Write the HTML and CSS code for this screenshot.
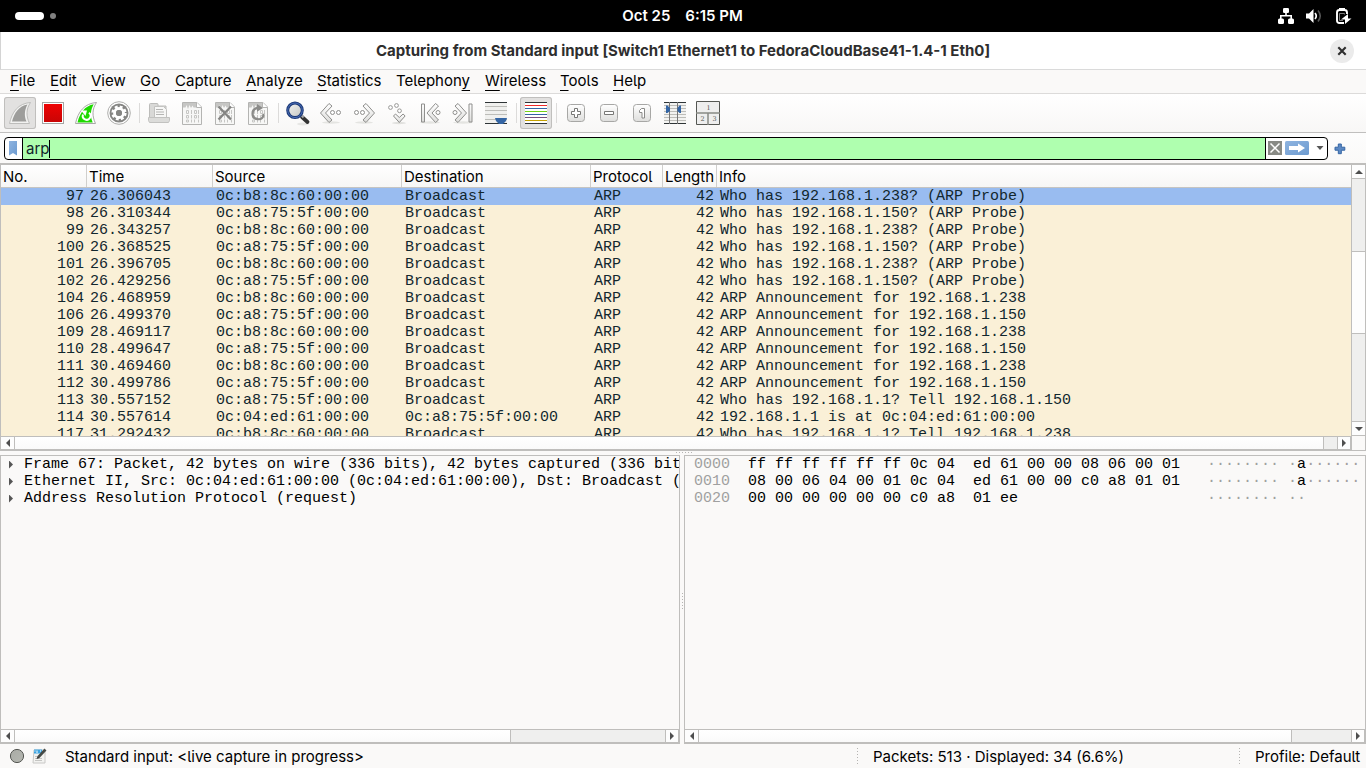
FILE: index.html
```html
<!DOCTYPE html>
<html lang="en">
<head>
<meta charset="utf-8">
<title>Capturing from Standard input</title>
<link rel="stylesheet" href="styles.css">
</head>
<body>
<svg class="defs" width="0" height="0">
  <defs>
    <linearGradient id="gBlue" x1="0" y1="0" x2="1" y2="1"><stop offset="0" stop-color="#8fb4e0"/><stop offset="1" stop-color="#6d9bd0"/></linearGradient>
    <linearGradient id="gLens" x1="0" y1="0" x2="1" y2="1"><stop offset="0" stop-color="#f4f4f2"/><stop offset="1" stop-color="#c3c5c1"/></linearGradient>
    <linearGradient id="gRed" x1="0" y1="0" x2="0" y2="1"><stop offset="0" stop-color="#ee0303"/><stop offset="1" stop-color="#c90505"/></linearGradient>
    <linearGradient id="gBtn" x1="0" y1="0" x2="0" y2="1"><stop offset="0" stop-color="#fff"/><stop offset="1" stop-color="#dededc"/></linearGradient>
    <linearGradient id="gNav" x1="0" y1="0" x2="0" y2="1"><stop offset="0" stop-color="#fff"/><stop offset="1" stop-color="#dcdcda"/></linearGradient>
    <linearGradient id="gBall" x1="0" y1="0" x2="1" y2="1"><stop offset="0" stop-color="#a9aba5"/><stop offset="1" stop-color="#b6b8b2"/></linearGradient>
    <g id="page">
      <path d="M6.500 5.500h14.500l4.500 4.500v17.500h-19z" fill="#f7f7f6" stroke="#b4b4b2"/>
      <path d="M7 6h13v4.500h-2.500l-1-2-1.500 2.500-1.500-3-1.500 4-1.500-4-1 2.500H7z" fill="#c6c6c4"/>
      <path d="M20.500 5.500v5h5" fill="#fff" stroke="#b4b4b2"/>
      <g fill="none" stroke="#c6c6c4">
        <path d="M10.500 13.500h2v3h-2zM18.500 13.500h2v3h-2z M15.500 13v4M22.500 13v4"/>
        <path d="M10.500 18.500h2v2.500h-2zM18.500 18.500h2v2.500h-2z M15.500 18v3.500M22.500 18v3.500"/>
        <path d="M10.500 23h2v2h-2z M15.500 22.500v3M18.500 22.500v3M22.500 22.500v3"/>
      </g>
    </g>
  </defs>
</svg>

<header class="topbar">
  <div class="spaces"><span class="pill"></span><span class="dot"></span></div>
  <div class="clock"><span>Oct 25</span><span>6:15 PM</span></div>
  <svg class="tray" width="76" height="20" viewBox="0 0 76 20">
    <g fill="#fff">
      <rect x="5" y="2" width="6" height="5" rx="1.300"/><rect x="0" y="12.500" width="6" height="5.500" rx="1.500"/><rect x="10" y="12.500" width="6" height="5.500" rx="1.500"/>
      <path d="M7.200 6h1.600v3H14v4h-1.600v-2.500H3.600V13H2V9h5.200z"/>
      <path d="M28 7.500h3L35.500 3v14L31 12.500h-3z"/>
    </g>
    <path d="M37 7q2.500 3 0 6" fill="none" stroke="#fff" stroke-width="1.700"/>
    <path d="M40 4.500q4.500 5.500 0 11" fill="none" stroke="#555" stroke-width="1.600"/>
    <path d="M66 17h-4.500q-2.500 0-2.500-2.500V6.500Q59 4 61.500 4h5Q69 4 69 6.500v1.500" fill="none" stroke="#fff" stroke-width="1.900"/>
    <rect x="61" y="2" width="6" height="2.500" fill="#fff"/><path d="M65 14.500h-3.500v-7h5v1" fill="none" stroke="#999" stroke-width=".8"/><path d="M70 8v4.500h3.500L67 18v-4.500h-4z" fill="#fff"/>
  </svg>
</header>

<div class="titlebar">
  <h1>Capturing from Standard input [Switch1 Ethernet1 to FedoraCloudBase41-1.4-1 Eth0]</h1>
  <svg class="close" width="24" height="24" viewBox="0 0 24 24"><circle cx="12" cy="12" r="12" fill="#ebebeb"/><path d="M8.300 8.300l7.400 7.400M15.700 8.300l-7.400 7.400" stroke="#2e2e2e" stroke-width="2.100"/></svg>
</div>

<nav class="menubar">
  <span class="m-file"><u>F</u>ile</span><span class="m-edit"><u>E</u>dit</span><span class="m-view"><u>V</u>iew</span><span class="m-go"><u>G</u>o</span><span class="m-capture"><u>C</u>apture</span><span class="m-analyze"><u>A</u>nalyze</span><span class="m-stat"><u>S</u>tatistics</span><span class="m-tel">Telephon<u>y</u></span><span class="m-wire"><u>W</u>ireless</span><span class="m-tools"><u>T</u>ools</span><span class="m-help"><u>H</u>elp</span>
</nav>

<div class="toolbar">
  <svg class="tool pressed" viewBox="0 0 32 32"><path d="M5.500 26.500C8 15 14 6.500 26.500 5.500C22 12 22 19 25.500 26.500z" fill="#f2f2f1" stroke="#bdbdbb"/><path d="M8 24.500C10.500 15.500 15 9 23.500 7.500C20.500 13 20 19 22.500 24.500z" fill="#9d9d9b"/></svg>
  <svg class="tool" viewBox="0 0 32 32"><rect x="5.500" y="5.500" width="21" height="21" fill="#fff" stroke="#a5a5a3"/><rect x="7" y="7" width="18" height="18" fill="url(#gRed)"/></svg>
  <svg class="tool" viewBox="0 0 32 32"><path d="M5.500 26.500C8 15 14 6.500 26.500 5.500C22 12 22 19 25.500 26.500z" fill="#fff" stroke="#a9a9a7"/><path d="M7.500 25.500C10 15.500 15 9 23.700 7.300C20.500 13 20 19 22.700 25.500z" fill="#1ed800"/><path d="M13 17.500a3.900 3.900 0 1 0 6-1.800" fill="none" stroke="#fff" stroke-width="2"/><path d="M11 13.500h6l-1.500 5.500z" fill="#fff"/></svg>
  <svg class="tool" viewBox="0 0 32 32"><circle cx="16" cy="16" r="11.300" fill="#fff" stroke="#aeaeac"/><circle cx="16" cy="16" r="9.500" fill="#858583"/><circle cx="16" cy="16" r="6.300" fill="none" stroke="#fff" stroke-width="2.600" stroke-dasharray="2.800 2.150"/><circle cx="16" cy="16" r="4.400" fill="none" stroke="#fff" stroke-width="3"/><circle cx="16" cy="16" r="3" fill="#858583"/></svg>
  <i class="sep"></i>
  <svg class="tool" viewBox="0 0 32 32"><path d="M6.500 22V7.500q0-1 1-1H14q1 0 1 1V9h8v13z" fill="#d9d9d7" stroke="#bcbcba"/><path d="M11.500 21V9.500h9l3 3V21z" fill="#f7f7f6" stroke="#c2c2c0"/><path d="M13 12.500h7M13 15h8M13 17.500h8" stroke="#b5b5b3"/><path d="M5.500 20.500h21v3l-1 2h-19l-1-2z" fill="#dcdcda" stroke="#c2c2c0"/></svg>
  <svg class="tool" viewBox="0 0 32 32"><use href="#page"/></svg>
  <svg class="tool" viewBox="0 0 32 32"><use href="#page"/><path d="M9.500 9.500L22 22.500M22 9.500L9.500 22.500" stroke="#848482" stroke-width="2.300"/></svg>
  <svg class="tool" viewBox="0 0 32 32"><use href="#page"/><path d="M15.500 10.800q-5 1-5 6t5.500 5.400t5.500-5.500" fill="none" stroke="#8b8b89" stroke-width="2.200"/><path d="M15 7l6 4-6 3.800z" fill="#8b8b89"/></svg>
  <i class="sep"></i>
  <svg class="tool" viewBox="0 0 32 32"><ellipse cx="21" cy="27" rx="6" ry="1.500" fill="#e6e6e4"/><path d="M20 20l5.500 5" stroke="#333" stroke-width="3.800" stroke-linecap="round"/><path d="M19.500 18.500l2 2" stroke="#aaa" stroke-width="2"/><circle cx="13" cy="13.300" r="7.300" fill="url(#gLens)" stroke="#1d3a78" stroke-width="3"/><circle cx="13" cy="13.300" r="7.300" fill="none" stroke="#486cb5"/></svg>
  <svg class="tool" viewBox="0 0 32 32"><ellipse cx="16" cy="25.500" rx="9" ry="1.200" fill="#e4e4e1"/><path d="M14 6.500l3 2.500-6.500 7 6.500 7-3 2.500L5.500 16z" fill="url(#gNav)" stroke="#8f8f8d"/><circle cx="17.500" cy="15.500" r="2" fill="#fff" stroke="#8f8f8d"/><circle cx="23.500" cy="15.500" r="2" fill="#fff" stroke="#8f8f8d"/></svg>
  <svg class="tool" viewBox="0 0 32 32"><ellipse cx="16" cy="25.500" rx="9" ry="1.200" fill="#e4e4e1"/><path d="M18 6.500l-3 2.500 6.500 7-6.500 7 3 2.500 8.500-9.500z" fill="url(#gNav)" stroke="#8f8f8d"/><circle cx="14.500" cy="15.500" r="2" fill="#fff" stroke="#8f8f8d"/><circle cx="8.500" cy="15.500" r="2" fill="#fff" stroke="#8f8f8d"/></svg>
  <svg class="tool" viewBox="0 0 32 32"><ellipse cx="18" cy="26" rx="7" ry="1.200" fill="#e0e0dd"/><path d="M12.500 19l2-2 3.800 3.500 3.800-3.500 2 2-5.800 6.500z" fill="url(#gNav)" stroke="#8c8c8a"/><g fill="#fff" stroke="#999997"><circle cx="9.500" cy="10.500" r="1.900"/><circle cx="15.500" cy="8.500" r="1.900"/><circle cx="18.500" cy="13.800" r="1.900"/></g></svg>
  <svg class="tool" viewBox="0 0 32 32"><ellipse cx="16" cy="25.500" rx="10" ry="1.200" fill="#e4e4e1"/><path d="M7.500 7h3v18h-3zM21.500 6.500l3 2.500-6.500 7 6.500 7-3 2.500L13 16z" fill="url(#gNav)" stroke="#8f8f8d"/><circle cx="24" cy="15.500" r="2" fill="#fff" stroke="#8f8f8d"/></svg>
  <svg class="tool" viewBox="0 0 32 32"><ellipse cx="16" cy="25.500" rx="10" ry="1.200" fill="#e4e4e1"/><path d="M22 7h3v18h-3zM11 6.500l-3 2.500 6.500 7-6.500 7 3 2.500 8.500-9.500z" fill="url(#gNav)" stroke="#8f8f8d"/><circle cx="8" cy="15.500" r="2" fill="#fff" stroke="#8f8f8d"/></svg>
  <svg class="tool" viewBox="0 0 32 32"><path d="M5 5h22v22H5z" fill="#f0f0ee"/><path d="M5 9.500h22M5 13.500h22M5 17.500h22M5 22.500h22" stroke="#bdbdb9"/><path d="M5 5.500h22M5 26.500h22" stroke="#2e3436"/><path d="M15 21h12l-1 3-3 3h-4l-3-3z" fill="#3465a4"/></svg>
  <i class="sep"></i>
  <svg class="tool pressed" viewBox="0 0 32 32"><path d="M5 5h22v22H5z" fill="#fff"/><path d="M5 5.500h22M5 26.500h22" stroke="#2e3436"/><path d="M5 8.500h22" stroke="#ef2929"/><path d="M5 11.500h22M5 17.500h22" stroke="#3465a4"/><path d="M5 14.500h22" stroke="#73d216"/><path d="M5 20.500h22" stroke="#75507b"/><path d="M5 23.500h22" stroke="#c4a000"/></svg>
  <i class="sep"></i>
  <svg class="tool" viewBox="0 0 32 32"><rect x="7.500" y="7.500" width="17" height="17" rx="3" fill="url(#gBtn)" stroke="#a7a7a5"/><path d="M14.500 11.500h3v3h3v3h-3v3h-3v-3h-3v-3h3z" fill="#fff" stroke="#777775"/></svg>
  <svg class="tool" viewBox="0 0 32 32"><rect x="7.500" y="7.500" width="17" height="17" rx="3" fill="url(#gBtn)" stroke="#a7a7a5"/><path d="M11.500 14.500h9v3h-9z" fill="#fff" stroke="#777775"/></svg>
  <svg class="tool" viewBox="0 0 32 32"><rect x="7.500" y="7.500" width="17" height="17" rx="3" fill="url(#gBtn)" stroke="#a7a7a5"/><path d="M15.500 11.500h3v9.500h-2.500v-5.500h-2.500v-2z" fill="#fff" stroke="#8a8a88"/></svg>
  <svg class="tool" viewBox="0 0 32 32"><path d="M5 5h22v22H5z" fill="#f3f3f1"/><path d="M5 8.500h22M5 11.500h22M5 14.500h22M5 17.500h22M5 20.500h22M5 23.500h22" stroke="#bdbdb9"/><path d="M5 5.500h22M5 26.500h22" stroke="#2e3436"/><path d="M10.500 5v22M18.500 5v22" stroke="#777"/><path d="M7 8.500h1.500L11 11v3l-2.500 2H7zM22 8.500h-1.500L18.500 11v3l2 2H22z" fill="#3465a4"/></svg>
  <svg class="tool" viewBox="0 0 32 32"><path d="M4.500 4.500h23v23h-23z" fill="#eee" stroke="#555753"/><path d="M4 16h24M16 16v12" stroke="#888a85" stroke-width="1.500"/><g font-family="DejaVu Serif, serif" font-size="6.500" fill="#555753" text-anchor="middle"><text x="16.500" y="13">1</text><text x="10.500" y="24.300">2</text><text x="22.500" y="24.300">3</text></g></svg>
</div>

<div class="filterbar">
  <div class="filter">
    <svg class="bookmark" width="17" height="20" viewBox="0 0 17 20"><path d="M4 3h8v14.500l-4-2.500-4 2.500z" fill="url(#gBlue)"/></svg>
    <div class="query">arp<i class="caret"></i></div>
    <svg width="61" height="20" viewBox="0 0 61 20"><path d="M2 3h14v14H2z" fill="#888a85"/><path d="M4.500 5.500l9 9M13.500 5.500l-9 9" stroke="#fff" stroke-width="1.500"/><rect x="19" y="3" width="24" height="14" rx="1.500" fill="url(#gBlue)"/><path d="M23 8h9V5.500l7 4.500-7 4.500V12h-9z" fill="#fff"/><path d="M50.500 8h7L54 12z" fill="#555"/></svg>
  </div>
  <svg class="add" width="12" height="12" viewBox="0 0 12 12"><path d="M4.300 1h3v3.200h3.500v3H7.300v3.500h-3V7.200H1v-3h3.300z" fill="#5d8ac4" stroke="#3465a4"/></svg>
</div>

<section class="packets">
  <div class="list">
    <div class="row head"><span>No.</span><span>Time</span><span>Source</span><span>Destination</span><span>Protocol</span><span>Length</span><span>Info</span></div>
    <div class="rows">
      <div class="row selected"><span>97</span><span>26.306043</span><span>0c:b8:8c:60:00:00</span><span>Broadcast</span><span>ARP</span><span>42</span><span>Who has 192.168.1.238? (ARP Probe)</span></div>
      <div class="row"><span>98</span><span>26.310344</span><span>0c:a8:75:5f:00:00</span><span>Broadcast</span><span>ARP</span><span>42</span><span>Who has 192.168.1.150? (ARP Probe)</span></div>
      <div class="row"><span>99</span><span>26.343257</span><span>0c:b8:8c:60:00:00</span><span>Broadcast</span><span>ARP</span><span>42</span><span>Who has 192.168.1.238? (ARP Probe)</span></div>
      <div class="row"><span>100</span><span>26.368525</span><span>0c:a8:75:5f:00:00</span><span>Broadcast</span><span>ARP</span><span>42</span><span>Who has 192.168.1.150? (ARP Probe)</span></div>
      <div class="row"><span>101</span><span>26.396705</span><span>0c:b8:8c:60:00:00</span><span>Broadcast</span><span>ARP</span><span>42</span><span>Who has 192.168.1.238? (ARP Probe)</span></div>
      <div class="row"><span>102</span><span>26.429256</span><span>0c:a8:75:5f:00:00</span><span>Broadcast</span><span>ARP</span><span>42</span><span>Who has 192.168.1.150? (ARP Probe)</span></div>
      <div class="row"><span>104</span><span>26.468959</span><span>0c:b8:8c:60:00:00</span><span>Broadcast</span><span>ARP</span><span>42</span><span>ARP Announcement for 192.168.1.238</span></div>
      <div class="row"><span>106</span><span>26.499370</span><span>0c:a8:75:5f:00:00</span><span>Broadcast</span><span>ARP</span><span>42</span><span>ARP Announcement for 192.168.1.150</span></div>
      <div class="row"><span>109</span><span>28.469117</span><span>0c:b8:8c:60:00:00</span><span>Broadcast</span><span>ARP</span><span>42</span><span>ARP Announcement for 192.168.1.238</span></div>
      <div class="row"><span>110</span><span>28.499647</span><span>0c:a8:75:5f:00:00</span><span>Broadcast</span><span>ARP</span><span>42</span><span>ARP Announcement for 192.168.1.150</span></div>
      <div class="row"><span>111</span><span>30.469460</span><span>0c:b8:8c:60:00:00</span><span>Broadcast</span><span>ARP</span><span>42</span><span>ARP Announcement for 192.168.1.238</span></div>
      <div class="row"><span>112</span><span>30.499786</span><span>0c:a8:75:5f:00:00</span><span>Broadcast</span><span>ARP</span><span>42</span><span>ARP Announcement for 192.168.1.150</span></div>
      <div class="row"><span>113</span><span>30.557152</span><span>0c:a8:75:5f:00:00</span><span>Broadcast</span><span>ARP</span><span>42</span><span>Who has 192.168.1.1? Tell 192.168.1.150</span></div>
      <div class="row"><span>114</span><span>30.557614</span><span>0c:04:ed:61:00:00</span><span>0c:a8:75:5f:00:00</span><span>ARP</span><span>42</span><span>192.168.1.1 is at 0c:04:ed:61:00:00</span></div>
      <div class="row"><span>117</span><span>31.292432</span><span>0c:b8:8c:60:00:00</span><span>Broadcast</span><span>ARP</span><span>42</span><span>Who has 192.168.1.1? Tell 192.168.1.238</span></div>
    </div>
    <div class="hscroll"><b class="arrow left"></b><i class="thumb"></i><b class="rest r-list"></b><b class="arrow right"></b></div>
  </div>
  <div class="vscroll"><b class="arrow up"></b><i class="before"></i><i class="vthumb"></i><i class="after"></i><b class="arrow down"></b><i class="corner"></i></div>
</section>

<div class="hsplit"><i></i></div>

<main class="details">
  <section class="pane tree">
    <div class="body">
      <p>Frame 67: Packet, 42 bytes on wire (336 bits), 42 bytes captured (336 bit</p>
      <p>Ethernet II, Src: 0c:04:ed:61:00:00 (0c:04:ed:61:00:00), Dst: Broadcast (</p>
      <p>Address Resolution Protocol (request)</p>
    </div>
    <div class="hscroll"><b class="arrow left"></b><i class="thumb"></i><b class="rest r-tree"></b><b class="arrow right"></b></div>
  </section>
  <div class="vsplit"><i></i></div>
  <section class="pane bytes">
    <pre class="body"><s>0000</s>  ff ff ff ff ff ff 0c 04  ed 61 00 00 08 06 00 01   <s>········ ·</s>a<s>······</s>
<s>0010</s>  08 00 06 04 00 01 0c 04  ed 61 00 00 c0 a8 01 01   <s>········ ·</s>a<s>······</s>
<s>0020</s>  00 00 00 00 00 00 c0 a8  01 ee                     <s>········ ··</s></pre>
    <div class="hscroll"><b class="arrow left"></b><i class="thumb"></i><b class="rest r-bytes"></b><b class="arrow right"></b></div>
  </section>
</main>

<footer class="status">
  <svg width="48" height="24" viewBox="0 0 48 24"><circle cx="17" cy="12" r="6.600" fill="url(#gBall)" stroke="#555753"/><path d="M34 6h11v13H33z" fill="#f3f3f1" stroke="#c8c8c6"/><path d="M34 5.500h8v4h-8z" fill="#3ba3e0"/><path d="M34.500 7h1M37 9V6.500M40 7h1" stroke="#fff"/><path d="M35 12.500h4M35 14.500h7M35 16.500h7" stroke="#c5c5c3"/><path d="M38.500 13L45.500 5.500" stroke="#464a46" stroke-width="2.600"/><path d="M36.500 15l1.200-3 2 2z" fill="#333"/></svg>
  <span class="s-file">Standard input: &lt;live capture in progress&gt;</span>
  <span class="s-count">Packets: 513 · Displayed: 34 (6.6%)</span>
  <span class="s-profile">Profile: Default</span>
</footer>
</body>
</html>
```
FILE: styles.css
```css
* { box-sizing: border-box; }
body {
  margin: 0; width: 1366px; height: 768px; overflow: hidden;
  display: flex; flex-direction: column;
  background: #faf9f8; color: #000;
  font: 15px/18px Inter, "Noto Sans", sans-serif;
  font-feature-settings: "cv05";
}
body > * { flex: none; }
svg { display: block; flex: none; }
.defs { position: absolute; }

.topbar { height: 32px; background: #000; color: #fff; display: grid; grid-template-columns: 1fr auto 1fr; align-items: center; }
.spaces { display: flex; align-items: center; gap: 6px; padding-left: 15px; }
.pill { width: 29px; height: 8px; border-radius: 4px; background: #fff; }
.dot { width: 6px; height: 6px; border-radius: 3px; background: #808080; }
.clock { display: flex; gap: 15px; padding-right: 1px; font-weight: 600; font-size: 15px; }
.tray { justify-self: end; margin-right: 12px; }

.titlebar { height: 38px; background: #fff; border-bottom: 1px solid #dadada; border-left: 1px solid #d4d4d4; display: flex; align-items: center; padding-right: 12px; }
.titlebar h1 { margin: 0 0 0 35px; flex: 1; text-align: center; font-size: 15px; font-weight: 700; color: #2e2e2e; white-space: nowrap; }

.menubar { height: 24px; border-bottom: 1px solid #dcdbda; display: flex; padding: 2px 0 0 10px; }
.menubar span { white-space: nowrap; }
.menubar u { text-decoration: underline; text-decoration-thickness: 1px; text-underline-offset: 4px; text-decoration-skip-ink: none; }
.m-file { width: 40px; } .m-edit { width: 41px; } .m-view { width: 49px; } .m-go { width: 35px; }
.m-capture { width: 71px; } .m-analyze { width: 71px; } .m-stat { width: 79px; } .m-tel { width: 89px; }
.m-wire { width: 75px; } .m-tools { width: 53px; }

.toolbar { height: 39px; display: flex; gap: 1px; padding: 3px 0 0 4px; border-bottom: 1px solid #c0bfbe; background: linear-gradient(#fff, #f8f7f6); }
.tool { width: 32px; height: 32px; }
.pressed { background: #e2e1e0; box-shadow: inset 0 0 0 1px #c0bfbd; border-radius: 3px; }
.sep { width: 6px; height: 20px; margin-top: 6px; background: linear-gradient(#dcdbda, #dcdbda) 3px 0 / 1px 100% no-repeat; }

.filterbar { height: 30px; display: flex; align-items: center; padding: 1px 0 0 4px; background: linear-gradient(#fdfdfd, #faf9f8); }
.filter { width: 1324px; height: 23px; border: 1px solid #000; border-radius: 4px; background: #fff; display: flex; align-items: stretch; }
.query { flex: 1; background: #afffaf; border: solid #000; border-width: 0 1px; padding: 2px 3px; line-height: 18px; color: #12232a; display: flex; }
.caret { width: 1px; height: 18px; margin-left: -1px; background: #000; }
.add { margin-left: 6px; }

.packets { height: 288px; display: flex; border: solid #bfbebc; border-width: 2px 1px 0; background: #fff; }
.list { width: 1350px; display: flex; flex-direction: column; }
.row { display: grid; grid-template-columns: 86px 126px 189px 189px 72px 54px 1fr; white-space: pre; }
.head { height: 23px; border-bottom: 1px solid #c5c4c2; background: linear-gradient(#fff, #f7f6f5); line-height: 24px; }
.head span { height: 22px; padding-left: 2px; border-right: 1px solid #d0cfcd; }
.head span:last-child { border: 0; }
.rows { height: 248px; overflow: hidden; background: #faf0d7; color: #12272e; font: 15px/17px "Liberation Mono", monospace; }
.rows .row { height: 17px; line-height: 18px; }
.rows .row span { padding-left: 3px; }
.rows .row span:first-child, .rows .row span:nth-child(6) { text-align: right; padding: 0 3px 0 0; }
.rows .selected { background: #99bcf0; }

.hscroll { height: 15px; flex: none; border-top: 1px solid #bfbebc; border-bottom: 2px solid #bfbebc; display: flex; background: #efefee; }
.thumb { flex: 1; background: linear-gradient(#fff, #fafafa); border-right: 1px solid #bfbebc; }
.arrow { display: flex; align-items: center; justify-content: center; background: #fdfdfd; }
.arrow.left { width: 14px; border-right: 1px solid #bfbebc; }
.arrow.right { width: 14px; border: solid #bfbebc; border-width: 0 1px; }
.arrow::before { content: ""; border: 4px solid transparent; }
.left::before { border-width: 4px 4px 4px 0; border-right-color: #4e4e4e; }
.right::before { border-width: 4px 0 4px 4px; border-left-color: #4e4e4e; }
.up::before { border-width: 0 4px 4px; border-bottom-color: #4e4e4e; }
.down::before { border-width: 4px 4px 0; border-top-color: #4e4e4e; }
.r-list { width: 13px; } .r-tree { width: 154px; } .r-bytes { width: 59px; }

.vscroll { width: 14px; border-left: 1px solid #bfbebc; display: flex; flex-direction: column; background: #efefee; }
.up { height: 14px; border-bottom: 1px solid #bfbebc; }
.before { height: 72px; }
.vthumb { height: 83px; background: #fdfdfd; border: solid #bfbebc; border-width: 1px 0; }
.after { flex: 1; }
.down { height: 15px; border: solid #bfbebc; border-width: 1px 0; }
.corner { height: 15px; background: #faf9f8; border-bottom: 1px solid #bfbebc; }

.hsplit { height: 4px; padding: 1px 0 0 676px; }
.hsplit i { display: block; width: 16px; height: 1px; background: repeating-linear-gradient(90deg, #b5b4b2 0 1px, transparent 1px 3px); }

.details { height: 289px; display: flex; }
.pane { border: 1px solid #bfbebc; border-bottom: 0; display: flex; flex-direction: column; overflow: hidden; }
.tree { width: 680px; }
.bytes { width: 682px; }
.body { flex: 1; margin: 0; overflow: hidden; font: 15px/17px "Liberation Mono", monospace; }
.bytes .body { padding-left: 9px; white-space: pre; }
.tree p { margin: 0; height: 17px; padding-left: 8px; display: flex; align-items: center; white-space: pre; }
.tree p::before { content: ""; flex: none; width: 4px; height: 8px; margin: 0 11px 0 0; background: #555; clip-path: polygon(0 0, 100% 50%, 0 100%); }
.bytes s { color: #a0a0a0; text-decoration: none; }
.vsplit { width: 4px; display: flex; align-items: center; padding-left: 2px; }
.vsplit i { width: 1px; height: 16px; margin-top: 3px; background: repeating-linear-gradient(#b5b4b2 0 1px, transparent 1px 3px); }

.status { height: 24px; display: flex; align-items: center; white-space: nowrap; }
.status span { margin-top: 2px; }
.s-file { width: 809px; padding-left: 17px; }
.s-count, .s-profile { height: 18px; background: repeating-linear-gradient(#b5b4b2 0 1px, transparent 1px 3px) 0 0 / 1px 100% no-repeat; }
.s-count { width: 382px; padding-left: 16px; }
.s-profile { padding-left: 16px; }
```
